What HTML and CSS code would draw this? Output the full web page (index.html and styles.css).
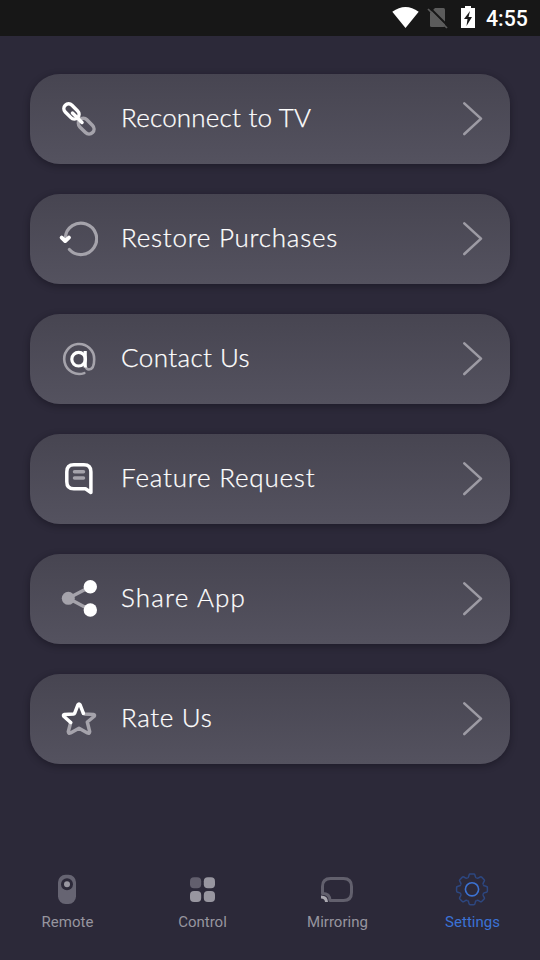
FILE: index.html
```html
<!DOCTYPE html>
<html lang="en">
<head>
<meta charset="utf-8">
<title>Settings</title>
<link rel="stylesheet" href="styles.css">
</head>
<body>
<header class="status">
  <svg width="27" height="36" viewBox="0 0 27 36"><path fill="#fff" d="M.3 11.8Q13.5 2 26.7 11.8L13.5 28Z"/></svg>
  <svg class="nosim" width="22" height="36" viewBox="0 0 22 36"><path fill="#5c5c5c" d="M8 8h8.500q1.500 0 1.500 1.500v16q0 1.500-1.500 1.500h-12Q3 27 3 25.500V13Z"/><path stroke="#171717" stroke-width="2" d="M2 7l19 19"/><path stroke="#5c5c5c" stroke-width="1.700" d="M1 9l19 19"/></svg>
  <svg class="battery" width="16" height="36" viewBox="0 0 16 36"><path fill="#fff" d="M5 6h6v2h4v20H1V8h4Z"/><path fill="#171717" d="M10 11L4 19h3.500l-1 7L12 17H8.500Z"/></svg>
  <time class="clock">4:55</time>
</header>
<main class="list">
  <a class="card">
    <svg class="icon" viewBox="0 0 40 40"><g class="soft"><rect x="19.200" y="22.200" width="18" height="10" rx="5" transform="rotate(45 28.200 27.200)"/></g><g class="bright"><rect x="4.700" y="7.700" width="17.500" height="9.500" rx="4.750" transform="rotate(45 13.450 12.450)"/><path d="M14.500 14l9.500 9.500"/></g></svg>
    <span class="label l1">Reconnect to TV</span><svg class="chevron" viewBox="0 0 24 36"><path d="M4.300 2.400L21 17.600 4.300 33"/></svg>
  </a>
  <a class="card">
    <svg class="icon" viewBox="0 0 40 40"><path class="soft thin" d="M7.300 18.500A15.700 15.700 0 1 1 11.400 30.500"/><path class="bright arrow" d="M3.700 18.600L7.200 22l3.700-3.400"/></svg>
    <span class="label l2">Restore Purchases</span><svg class="chevron" viewBox="0 0 24 36"><path d="M4.300 2.400L21 17.600 4.300 33"/></svg>
  </a>
  <a class="card">
    <svg class="icon" viewBox="0 0 40 40"><path class="soft at" d="M26.300 34.100A15 15 0 1 1 36.200 20.300C36.200 26 34.700 30.500 31 30.500Q28.400 30.500 27.600 27.500"/><g class="bright thin"><circle cx="20.600" cy="20.200" r="6.800"/><path stroke-linecap="butt" d="M27.200 12v16.500"/></g></svg>
    <span class="label l3">Contact Us</span><svg class="chevron" viewBox="0 0 24 36"><path d="M4.300 2.400L21 17.600 4.300 33"/></svg>
  </a>
  <a class="card">
    <svg class="icon" viewBox="0 0 40 40"><path class="bright" d="M15.800 5.800h10.100q7 0 7 7v20.700l-5.400-3.700H15.800q-7 0-7-7v-10q0-7 7-7Z"/><path class="soft" d="M16.500 12.700h9M16.500 19h9"/></svg>
    <span class="label l4">Feature Request</span><svg class="chevron" viewBox="0 0 24 36"><path d="M4.300 2.400L21 17.600 4.300 33"/></svg>
  </a>
  <a class="card">
    <svg class="icon" viewBox="0 0 40 40"><path class="soft" d="M32.300 7.700l-22 11.600 22 11.700"/><circle cx="10.300" cy="19.300" r="6.500" fill="#a5a3ab"/><circle cx="32.300" cy="7.700" r="6.700" fill="#fff"/><circle cx="32.300" cy="31" r="6.700" fill="#fff"/></svg>
    <span class="label l5">Share App</span><svg class="chevron" viewBox="0 0 24 36"><path d="M4.300 2.400L21 17.600 4.300 33"/></svg>
  </a>
  <a class="card">
    <svg class="icon" viewBox="0 0 40 40"><path class="soft" d="M25.400 14.300Q25.700 15 26.600 15.100L35.500 15.500Q37.300 16 36 17.500L29.300 23 31.700 32.700Q31.500 34.900 29.500 34L21 29.200 12.500 34Q10.500 34.900 10.300 32.700L12.700 23.500"/><path class="bright" d="M12.700 23.500L6 17.500Q4.700 16 6.500 15.500L15.400 15.100Q16.300 15 16.600 14.300L20 5.700Q21 4.100 22 5.700L25.400 14.300"/></svg>
    <span class="label l6">Rate Us</span><svg class="chevron" viewBox="0 0 24 36"><path d="M4.300 2.400L21 17.600 4.300 33"/></svg>
  </a>
</main>
<nav class="tabs">
  <a class="tab"><svg viewBox="0.500 0 36 36"><rect x="8.500" y="2.700" width="18" height="29.300" rx="7.500" fill="#666472"/><circle cx="17.500" cy="12.300" r="6" fill="#2c2939"/><circle cx="17.500" cy="12.300" r="3" fill="#9997a1"/></svg><span>Remote</span></a>
  <a class="tab"><svg viewBox="0.500 0 36 36" fill="#9896a0"><rect x="5.500" y="5.200" width="11.200" height="11" rx="4" fill="#625f6d"/><rect x="19.300" y="5.200" width="11.200" height="11" rx="4"/><rect x="5.500" y="19" width="11.200" height="11" rx="4"/><rect x="19.300" y="19" width="11.200" height="11" rx="4"/></svg><span>Control</span></a>
  <a class="tab"><svg viewBox="0.500 0 36 36" fill="none"><path stroke="#62606d" stroke-width="3" d="M3 21.500V14.500Q3 6.500 11 6.500h13q8 0 8 8v6q0 8-8 8H10.500Q10.300 21.500 3 21.500Z" stroke-linejoin="round"/><path stroke="#aaa8b0" stroke-width="3" d="M1.500 25Q6.800 25 7 30"/></svg><span>Mirroring</span></a>
  <a class="tab active"><svg viewBox="0.500 0 36 36" fill="none" stroke="#2d4780" stroke-width="1.500"><defs><path id="tooth" d="M-4.700-11.300Q-3.500-11.500-3.200-13.200L-2.900-14.500Q-2.700-15.400-1.800-15.400H1.800Q2.700-15.400 2.900-14.500L3.200-13.200Q3.500-11.500 4.700-11.300"/></defs><g transform="translate(17.500 17.300)"><use href="#tooth"/><use href="#tooth" transform="rotate(45)"/><use href="#tooth" transform="rotate(90)"/><use href="#tooth" transform="rotate(135)"/><use href="#tooth" transform="rotate(180)"/><use href="#tooth" transform="rotate(225)"/><use href="#tooth" transform="rotate(270)"/><use href="#tooth" transform="rotate(315)"/><circle r="6.600" stroke="#3c72d2" stroke-width="1.600"/></g></svg><span>Settings</span></a>
</nav>
</body>
</html>
```
FILE: styles.css
```css
* { box-sizing: border-box; }
body {
  margin: 0;
  height: 960px;
  display: flex;
  flex-direction: column;
  background: #2c2939;
  font-family: Roboto, sans-serif;
  overflow: hidden;
}
svg { display: block; flex: none; }
.status {
  height: 36px;
  padding-left: 392px;
  display: flex;
  background: #171717;
}
.nosim { margin-left: 8px; }
.battery { margin-left: 11px; }
.clock {
  margin-left: 10px;
  color: #fff;
  font-size: 21.3px;
  font-weight: 500;
  line-height: 38px;
  white-space: nowrap;
}
.list {
  display: flex;
  flex-direction: column;
  gap: 30px;
  padding: 38px 30px 0;
}
.card {
  height: 90px;
  padding: 0 26px 0 28px;
  display: flex;
  align-items: center;
  border-radius: 30px;
  background: linear-gradient(#474551, #54525f);
  box-shadow: 0 2px 7px rgba(12, 10, 20, .42);
}
.icon { width: 40px; height: 40px; fill: none; }
.soft { stroke: #a5a3ab; }
.bright { stroke: #fff; }
.soft, .bright { stroke-width: 3.5; stroke-linecap: round; stroke-linejoin: round; }
.thin { stroke-width: 3.2; }
.at { stroke-width: 2.6; }
.arrow { stroke-width: 4; }
.label {
  flex: 1;
  margin-left: 23px;
  padding-bottom: 4px;
  color: #fff;
  font: 300 26px/36px Lato, sans-serif;
  -webkit-text-stroke: .25px #fff;
  white-space: nowrap;
}
.l1 { letter-spacing: .2px; }
.l2 { letter-spacing: .74px; }
.l3 { letter-spacing: .4px; }
.l4 { letter-spacing: .79px; }
.l5 { letter-spacing: 1.2px; }
.l6 { letter-spacing: .65px; }
.chevron { width: 24px; height: 36px; fill: none; stroke: #9d9ba4; stroke-width: 2.6; stroke-linecap: round; stroke-linejoin: round; }
.tabs {
  margin-top: auto;
  height: 88px;
  display: grid;
  grid-template-columns: repeat(4, 1fr);
}
.tab {
  display: flex;
  flex-direction: column;
  align-items: center;
  color: #97959f;
  font-size: 15px;
  line-height: 20px;
}
.tab svg { width: 36px; height: 36px; }
.tab span { margin: 4px 0 0; }
.active { color: #3b72d5; }
```
